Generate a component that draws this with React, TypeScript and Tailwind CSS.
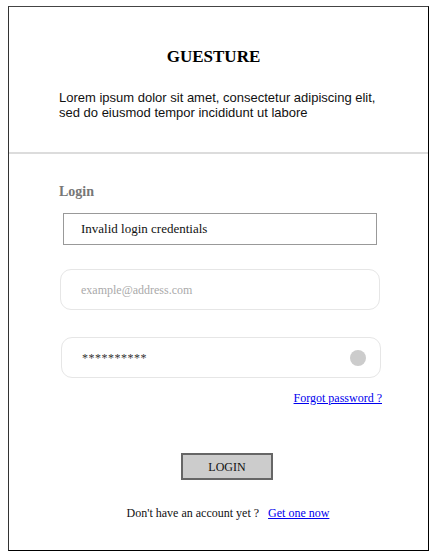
export default function App() {
  const serif = { fontFamily: '"Liberation Serif", "Times New Roman", serif' };
  return (
    <div className="w-[434px] h-[556px] bg-white overflow-hidden">
      <div className="mt-[6px] ml-[8px] w-[421px] h-[545px] border border-black border-l-[#333] border-t-[#444]">
        {/* Header */}
        <div className="pt-[40px] h-[147px] border-b-2 border-[#dcdcdc]">
          <h1 className="m-0 text-center text-[17px] leading-[20px] font-bold text-black pr-[10px]" style={serif}>
            GUESTURE
          </h1>
          <p
            className="mt-[23px] pl-[50px] pr-[40px] text-[13px] leading-[15px] text-[#111]"
            style={{ fontFamily: '"Liberation Sans", Arial, sans-serif' }}
          >
            Lorem ipsum dolor sit amet, consectetur adipiscing elit, sed do eiusmod tempor incididunt ut labore
          </p>
        </div>

        {/* Form */}
        <div className="pl-[50px] pt-[29px]" style={serif}>
          <p className="text-[14px] leading-[17px] font-bold text-[#777]">Login</p>
          <div className="mt-[13px] ml-[4px] w-[314px] h-[32px] border border-[#999] flex items-center pl-[17px] text-[13px] text-[#111]">
            Invalid login credentials
          </div>
          <div className="mt-[24px] ml-[1px] w-[320px] h-[41px] rounded-[11px] border border-[#e6e6e6] flex items-center pl-[20px] text-[12px] text-[#aaa]">
            example@address.com
          </div>
          <div className="mt-[27px] ml-[2px] w-[320px] h-[41px] rounded-[11px] border border-[#e6e6e6] flex items-center justify-between pl-[20px] pr-[14px] text-[12px] text-[#333]">
            <span className="tracking-[0.5px]">**********</span>
            <span className="w-[16px] h-[16px] rounded-full bg-[#cccccc]" />
          </div>
          <div className="w-[323px] mt-[13px] flex justify-end">
            <a href="#" className="text-[12px] leading-[15px] text-[#0000ee] underline">
              Forgot password ?
            </a>
          </div>
          <div className="w-[324px] mt-[47px] flex justify-center">
            <button className="ml-[12px] w-[92px] h-[27px] bg-[#cccccc] border-2 border-[#666] text-[12px] text-[#111]">
              LOGIN
            </button>
          </div>
          <div className="w-[324px] mt-[26px] flex justify-center items-center gap-[9px] text-[12px] leading-[15px] pl-[14px]">
            <span className="text-[#111]">Don't have an account yet ?</span>
            <a href="#" className="text-[#0000ee] underline">
              Get one now
            </a>
          </div>
        </div>
      </div>
    </div>
  );
}
